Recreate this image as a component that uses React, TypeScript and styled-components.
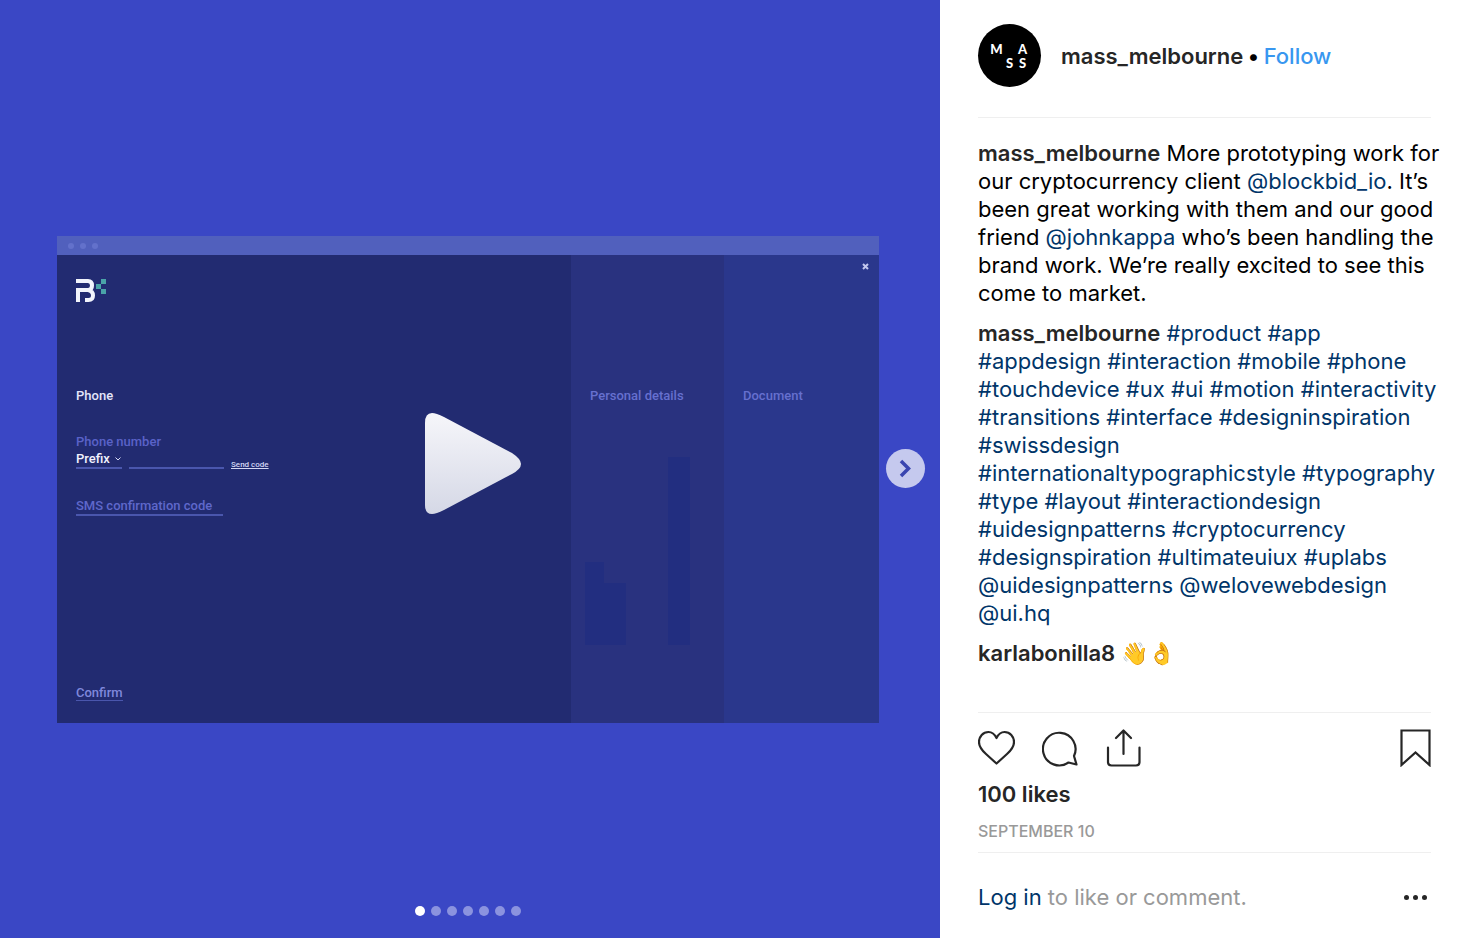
import React from "react";
import styled, { createGlobalStyle } from "styled-components";

const GlobalStyle = createGlobalStyle`
  *, *::before, *::after { box-sizing: border-box; }
  body { margin: 0; background: #fff; color: #000; font-family: Inter, "Liberation Sans", sans-serif; }
  button, input, select { font: inherit; margin: 0; padding: 0; border: 0; background: none; border-radius: 0; }
  button { cursor: pointer; }
  svg { display: block; }
`;

const Post = styled.article`
  display: flex;
  min-height: 100vh;
`;

/* media side */

const Media = styled.section`
  position: relative;
  flex: 1;
  min-width: 0;
  display: flex;
  align-items: center;
  padding: 21px 61px 0 57px;
  background: #3a47c5;
`;

const MockWindow = styled.div`
  flex: 1;
  min-width: 0;
  font-family: Roboto, sans-serif;
  font-size: 13px;
  font-weight: 500;
  line-height: 16px;
`;

const TitleBar = styled.div`
  display: flex;
  align-items: center;
  gap: 6px;
  height: 19px;
  padding-left: 11px;
  background: #5160bd;
`;

const WindowDot = styled.span`
  width: 6px;
  height: 6px;
  border-radius: 50%;
  background: #6371cb;
`;

const Steps = styled.div`
  display: grid;
  grid-template-columns: 514fr 153fr 155fr;
  height: 468px;
`;

const Step = styled.div<{ $tone: string }>`
  position: relative;
  display: flex;
  flex-direction: column;
  align-items: flex-start;
  padding: 24px 19px 22px;
  background: ${(p) => p.$tone};
`;

const BrandRow = styled.div`
  height: 109px;
`;

const StepTitle = styled.h2<{ $active?: boolean }>`
  margin: 0;
  font-size: 13px;
  font-weight: 500;
  line-height: 16px;
  color: ${(p) => (p.$active ? "#e4e6fa" : "#6670cf")};
`;

const StepShade = styled.svg`
  position: absolute;
  left: 14px;
  bottom: 78px;
`;

const FieldLabel = styled.label`
  margin-top: 30px;
  color: #5a62c8;
`;

const FieldRow = styled.div`
  display: flex;
  align-items: flex-end;
  gap: 7px;
`;

const PrefixField = styled.div`
  display: flex;
  align-items: center;
  width: 46px;
  height: 19px;
  border-bottom: 2px solid #4a56ad;
  color: #d9dcf6;
`;

const PrefixSelect = styled.select`
  appearance: none;
  width: 39px;
  color: #f0f1fd;
`;

const LineInput = styled.input<{ $width: number }>`
  width: ${(p) => p.$width}px;
  height: 19px;
  border-bottom: 2px solid #4a56ad;
  color: #f0f1fd;
  &::placeholder { color: #5f68cb; opacity: 1; }
`;

const CodeInput = styled(LineInput)`
  margin-top: 28px;
`;

const SendCode = styled.button`
  font-size: 8px;
  line-height: 9px;
  color: #d4d7f4;
  text-decoration: underline;
`;

const Confirm = styled.button`
  margin-top: auto;
  border-bottom: 1px solid #4a56ad;
  line-height: 14px;
  color: #7f88dc;
`;

const CloseButton = styled.button`
  position: absolute;
  top: 8px;
  right: 10px;
`;

const PlayButton = styled.button`
  position: absolute;
  top: calc(50% - 56px);
  left: calc(50% - 46px);
`;

const NextButton = styled.button`
  position: absolute;
  top: calc(50% - 20px);
  right: 15px;
  display: grid;
  place-items: center;
  width: 39px;
  height: 39px;
  border-radius: 50%;
  background: #c5c9ee;
`;

const Pager = styled.div`
  position: absolute;
  bottom: 22px;
  left: 0;
  right: 4px;
  display: flex;
  justify-content: center;
  gap: 6px;
`;

const PagerDot = styled.button<{ $active: boolean }>`
  width: 10px;
  height: 10px;
  border-radius: 50%;
  background: ${(p) => (p.$active ? "#fff" : "#8b93df")};
`;

/* details side */

const Details = styled.section`
  display: flex;
  flex-direction: column;
  flex: none;
  width: 526px;
  padding: 0 35px 0 38px;
  font-size: 22px;
  line-height: 28px;
`;

const Header = styled.header`
  display: flex;
  align-items: center;
  gap: 20px;
  padding: 24px 0 30px;
  border-bottom: 1px solid #efefef;
`;

const Avatar = styled.a`
  display: grid;
  grid-template-columns: repeat(3, 13px);
  grid-template-rows: repeat(2, 14px);
  place-content: center;
  place-items: center;
  width: 63px;
  height: 63px;
  border-radius: 50%;
  background: #000;
  color: #fff;
  font-family: Lato, sans-serif;
  font-size: 13px;
  font-weight: 900;
  line-height: 14px;
  text-decoration: none;
`;

const AvatarGap = styled.span``;

const Identity = styled.div`
  display: flex;
  align-items: center;
  gap: 4px;
`;

const UserLink = styled.a`
  color: #262626;
  font-weight: 600;
  text-decoration: none;
`;

const FollowButton = styled.button`
  color: #3897f0;
  font-weight: 500;
`;

const Comments = styled.ul`
  display: flex;
  flex-direction: column;
  gap: 12px;
  flex: 1;
  margin: 0 -9px 0 0;
  padding: 21px 0 24px;
  list-style: none;
`;

const Comment = styled.li`
  margin: 0;
`;

const TagLink = styled.a`
  color: #003569;
  text-decoration: none;
`;

const Actions = styled.div`
  display: flex;
  align-items: center;
  gap: 27px;
  padding-top: 16px;
  border-top: 1px solid #efefef;
`;

const IconButton = styled.button<{ $end?: boolean }>`
  margin-left: ${(p) => (p.$end ? "auto" : "0")};
  color: #262626;
`;

const Likes = styled.a`
  margin-top: 13px;
  color: #262626;
  font-weight: 600;
  text-decoration: none;
`;

const PostDate = styled.time`
  margin-top: 13px;
  padding-bottom: 11px;
  color: #999;
  font-size: 16px;
  font-weight: 500;
  line-height: 20px;
`;

const Footer = styled.footer`
  display: flex;
  align-items: center;
  justify-content: space-between;
  padding: 30px 0 27px;
  border-top: 1px solid #efefef;
  color: #999;
`;

const tags =
  "#product #app #appdesign #interaction #mobile #phone #touchdevice #ux #ui #motion #interactivity #transitions #interface #designinspiration #swissdesign #internationaltypographicstyle #typography #type #layout #interactiondesign #uidesignpatterns #cryptocurrency #designspiration #ultimateuiux #uplabs @uidesignpatterns @welovewebdesign @ui.hq".split(" ");

const slides = [1, 2, 3, 4, 5, 6, 7];

export default function App() {
  return (
    <>
      <GlobalStyle />
      <Post>
        <Media aria-label="Post media">
          <MockWindow>
            <TitleBar>
              <WindowDot />
              <WindowDot />
              <WindowDot />
            </TitleBar>
            <Steps>
              <Step $tone="#222b71">
                <BrandRow>
                  <svg width="32" height="24" viewBox="0 0 32 24" aria-label="Blockbid">
                    <path d="M0 2H12Q16 2 16 6.500Q16 10.500 12.500 11H2V23M12 11Q17 12 17 16.500Q17 21 12.500 21H9" fill="none" stroke="#f2f4fc" strokeWidth="4" />
                    <path d="M25 0h5v5h-5zM20 5h5v5h-5zM25 10h5v5h-5z" fill="#4aa3a8" />
                  </svg>
                </BrandRow>
                <StepTitle $active>Phone</StepTitle>
                <FieldLabel htmlFor="phone">Phone number</FieldLabel>
                <FieldRow>
                  <PrefixField>
                    <PrefixSelect aria-label="Prefix">
                      <option>Prefix</option>
                    </PrefixSelect>
                    <svg width="6" height="4" viewBox="0 0 6 4" fill="none" stroke="currentColor">
                      <path d="M.5 .5 3 3 5.500 .5" />
                    </svg>
                  </PrefixField>
                  <LineInput id="phone" type="tel" $width={95} />
                  <SendCode type="button">Send code</SendCode>
                </FieldRow>
                <CodeInput aria-label="SMS confirmation code" placeholder="SMS confirmation code" $width={147} />
                <Confirm type="button">Confirm</Confirm>
              </Step>
              <Step $tone="#29327f">
                <StepShade width="106" height="188" viewBox="0 0 106 188" fill="#222e80" aria-hidden="true">
                  <path d="M0 105H19V126H41V188H0ZM83 0H105V188H83Z" />
                </StepShade>
                <BrandRow />
                <StepTitle>Personal details</StepTitle>
              </Step>
              <Step $tone="#2a378c">
                <BrandRow />
                <StepTitle>Document</StepTitle>
                <CloseButton type="button" aria-label="Close">
                  <svg width="7" height="7" viewBox="0 0 7 7" stroke="#c3c7ee" strokeWidth="2">
                    <path d="M1 1 6 6M6 1 1 6" />
                  </svg>
                </CloseButton>
              </Step>
            </Steps>
          </MockWindow>
          <PlayButton type="button" aria-label="Play video">
            <svg width="98" height="102" viewBox="0 0 98 102">
              <defs>
                <linearGradient id="play" x1="0" y1="0" x2="0" y2="1">
                  <stop offset="0" stopColor="#f6f6fa" />
                  <stop offset="1" stopColor="#d5d8e6" />
                </linearGradient>
              </defs>
              <path d="M1 10Q1 0 8 0Q12 0 20 4L88 40Q97 46 97 51Q97 56 88 61L20 97Q12 101 8 101Q1 101 1 92Z" fill="url(#play)" />
            </svg>
          </PlayButton>
          <NextButton type="button" aria-label="Next">
            <svg width="13" height="19" viewBox="0 0 13 19" fill="none" stroke="#3a45b0" strokeWidth="3.500">
              <path d="M2 2 9.500 9.500 2 17" />
            </svg>
          </NextButton>
          <Pager>
            {slides.map((n) => (
              <PagerDot key={n} type="button" aria-label={`Slide ${n}`} $active={n === 1} />
            ))}
          </Pager>
        </Media>

        <Details>
          <Header>
            <Avatar href="#profile" aria-label="mass_melbourne profile">
              <span>M</span>
              <AvatarGap />
              <span>A</span>
              <AvatarGap />
              <span>S</span>
              <span>S</span>
            </Avatar>
            <Identity>
              <UserLink href="#profile">mass_melbourne</UserLink>
              <span>•</span>
              <FollowButton type="button">Follow</FollowButton>
            </Identity>
          </Header>
          <Comments>
            <Comment>
              <UserLink href="#profile">mass_melbourne</UserLink> More prototyping work for our cryptocurrency client{" "}
              <TagLink href="#blockbid">@blockbid_io</TagLink>. It’s been great working with them and our good friend{" "}
              <TagLink href="#johnkappa">@johnkappa</TagLink> who’s been handling the brand work. We’re really excited to see this come to market.
            </Comment>
            <Comment>
              <UserLink href="#profile">mass_melbourne</UserLink>
              {tags.map((tag) => (
                <React.Fragment key={tag}>
                  {" "}
                  <TagLink href={`#${tag.slice(1)}`}>{tag}</TagLink>
                </React.Fragment>
              ))}
            </Comment>
            <Comment>
              <UserLink href="#karla">karlabonilla8</UserLink> 👋👌
            </Comment>
          </Comments>
          <Actions>
            <IconButton type="button" aria-label="Like">
              <svg width="37" height="38" viewBox="0 0 37 38" fill="none" stroke="currentColor" strokeWidth="2.200" strokeLinejoin="round">
                <path d="M18.500 9C16.500 5 13.500 3 10.500 3C5 3 1 7.500 1 13C1 18 3.500 21 8 25L18.500 34.500L29 25C33.500 21 36 18 36 13C36 7.500 32 3 26.500 3C23.500 3 20.500 5 18.500 9Z" />
              </svg>
            </IconButton>
            <IconButton type="button" aria-label="Comment">
              <svg width="37" height="38" viewBox="0 0 37 38" fill="none" stroke="currentColor" strokeWidth="2.200" strokeLinejoin="round">
                <path d="M34.500 35.500L32 27A16.300 16.300 0 1 0 26.500 33.500Z" />
              </svg>
            </IconButton>
            <IconButton type="button" aria-label="Share">
              <svg width="35" height="38" viewBox="0 0 35 38" fill="none" stroke="currentColor" strokeWidth="2.200" strokeLinecap="round" strokeLinejoin="round">
                <path d="M17.500 25V2M10 9 17.500 1.500 25 9M2 18.500V33Q2 36.500 5.500 36.500H30Q33.500 36.500 33.500 33V18.500" />
              </svg>
            </IconButton>
            <IconButton type="button" aria-label="Save" $end>
              <svg width="31" height="38" viewBox="0 0 31 38" fill="none" stroke="currentColor" strokeWidth="2.200">
                <path d="M1.500 1.500H29.500V36L15.500 23.500 1.500 36Z" />
              </svg>
            </IconButton>
          </Actions>
          <Likes href="#likes">100 likes</Likes>
          <PostDate>SEPTEMBER 10</PostDate>
          <Footer>
            <span>
              <TagLink href="#login">Log in</TagLink> to like or comment.
            </span>
            <IconButton type="button" aria-label="More options">
              <svg width="30" height="6" viewBox="0 0 30 6" fill="currentColor">
                <circle cx="5.500" cy="3.500" r="2.500" />
                <circle cx="14.500" cy="3.500" r="2.500" />
                <circle cx="23.500" cy="3.500" r="2.500" />
              </svg>
            </IconButton>
          </Footer>
        </Details>
      </Post>
    </>
  );
}
